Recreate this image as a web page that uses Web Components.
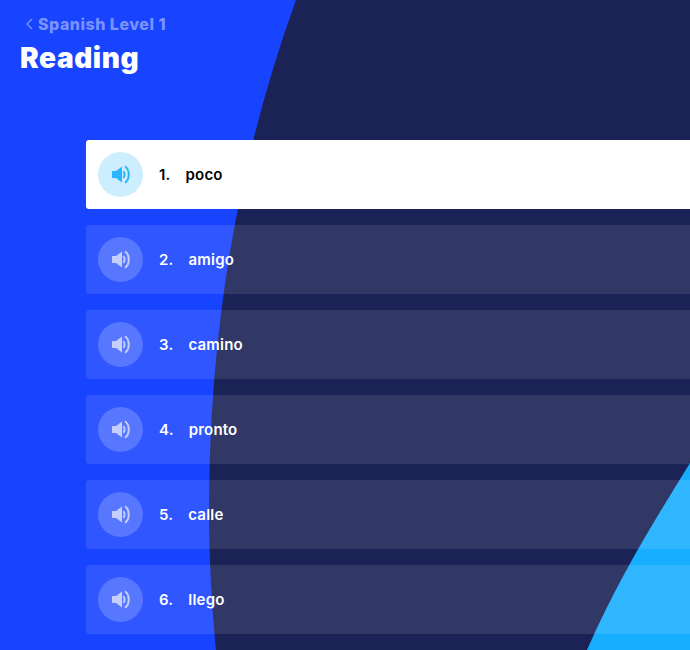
<!DOCTYPE html>
<html lang="es">
<head>
<meta charset="utf-8">
<title>Reading</title>
<style>
    html, body { margin: 0; height: 100%; overflow: hidden; background: #1843ff; }
    body { font-family: Inter, Lato, sans-serif; }
</style>
</head>
<body>
<reading-page>
    <lesson-header slot="header" course="Spanish Level 1" title="Reading"></lesson-header>
    <word-row number="1" active>poco</word-row>
    <word-row number="2">amigo</word-row>
    <word-row number="3">camino</word-row>
    <word-row number="4">pronto</word-row>
    <word-row number="5">calle</word-row>
    <word-row number="6">llego</word-row>
</reading-page>

<script>
class ReadingPage extends HTMLElement {
    constructor() {
        super();
        this.attachShadow({mode: 'open'});
        this.shadowRoot.innerHTML = `
            <style>
                :host {
                    display: block;
                    position: relative;
                    height: 650px;
                    overflow: hidden;
                    background: #1843ff;
                }
                svg {
                    position: absolute;
                    top: 0;
                    left: 0;
                }
                .content {
                    position: relative;
                    display: flex;
                    flex-direction: column;
                }
                .list {
                    display: flex;
                    flex-direction: column;
                    gap: 16px;
                    padding-left: 86px;
                }
            </style>
            <svg width="690" height="650" viewBox="0 0 690 650">
                <path fill="#1b2255" d="M296 0 C238 160 209 330 209 510 C209 560 212 610 216 650 L690 650 L690 0 Z"/>
                <path fill="#18aeff" d="M690 463 C655 520 620 575 587 650 L690 650 Z"/>
            </svg>
            <div class="content">
                <slot name="header"></slot>
                <div class="list"><slot></slot></div>
            </div>
        `;
    }
}

class LessonHeader extends HTMLElement {
    constructor() {
        super();
        this.attachShadow({mode: 'open'});
        this.shadowRoot.innerHTML = `
            <style>
                :host {
                    display: block;
                    height: 140px;
                    box-sizing: border-box;
                    padding: 14px 0 0 20px;
                    font-family: Inter, Lato, sans-serif;
                }
                .back {
                    display: flex;
                    align-items: center;
                    gap: 5px;
                    height: 20px;
                    padding-left: 6px;
                    color: #7b93ff;
                    font-size: 16px;
                    font-weight: 800;
                    letter-spacing: 0.5px;
                }
                h1 {
                    margin: 4px 0 0;
                    color: #fff;
                    font-size: 28px;
                    line-height: 40px;
                    font-weight: 900;
                    letter-spacing: 0.6px;
                }
            </style>
            <div class="back">
                <svg width="7" height="12" viewBox="0 0 7 12" fill="none" stroke="#7b93ff" stroke-width="1.4">
                    <path d="M6 1 L1 6 L6 11"/>
                </svg>
                <span id="course"></span>
            </div>
            <h1 id="title"></h1>
        `;
    }

    connectedCallback() {
        this.shadowRoot.querySelector('#course').textContent = this.getAttribute('course');
        this.shadowRoot.querySelector('#title').textContent = this.getAttribute('title');
    }
}

class SpeakerIcon extends HTMLElement {
    constructor() {
        super();
        this.attachShadow({mode: 'open'});
        this.shadowRoot.innerHTML = `
            <style>
                :host {
                    display: flex;
                    align-items: center;
                    justify-content: center;
                    width: 45px;
                    height: 45px;
                    flex: none;
                    border-radius: 50%;
                    background: var(--speaker-bg, rgba(255,255,255,0.2));
                }
                svg { display: block; margin-left: 1px; }
                path.cone { fill: var(--speaker-color, #c4cfff); }
                path.wave { fill: none; stroke: var(--speaker-color, #c4cfff); stroke-width: 2; }
            </style>
            <svg width="19" height="19" viewBox="0 0 19 19">
                <path class="cone" d="M0 6.5 Q0 6 .5 6 L4 6 L10 1.5 L10 17.5 L4 13 L.5 13 Q0 13 0 12.5 Z"/>
                <path class="wave" d="M11.3 6.3 C13 7.6 13 11.4 11.3 12.7"/>
                <path class="wave" d="M13 1.2 C18 4.8 18 14.2 13 17.8"/>
            </svg>
        `;
    }
}

class WordRow extends HTMLElement {
    constructor() {
        super();
        this.attachShadow({mode: 'open'});
        this.shadowRoot.innerHTML = `
            <style>
                :host {
                    display: flex;
                    align-items: center;
                    gap: 16px;
                    height: 69px;
                    box-sizing: border-box;
                    padding-left: 12px;
                    width: 620px;
                    border-radius: 3px;
                    color: #fff;
                    background: rgba(255,255,255,0.1);
                    font-family: Inter, Lato, sans-serif;
                    font-size: 15px;
                    font-weight: 600;
                    letter-spacing: 0.2px;
                }
                :host([active]) {
                    color: #000;
                    background: #fff;
                    --speaker-bg: #cdeeff;
                    --speaker-color: #2bb5ff;
                }
                .text {
                    display: flex;
                    gap: 15px;
                }
            </style>
            <speaker-icon></speaker-icon>
            <div class="text">
                <span id="number"></span>
                <slot></slot>
            </div>
        `;
    }

    connectedCallback() {
        this.shadowRoot.querySelector('#number').textContent = this.getAttribute('number') + '.';
    }
}

customElements.define('reading-page', ReadingPage);
customElements.define('lesson-header', LessonHeader);
customElements.define('speaker-icon', SpeakerIcon);
customElements.define('word-row', WordRow);
</script>
</body>
</html>
